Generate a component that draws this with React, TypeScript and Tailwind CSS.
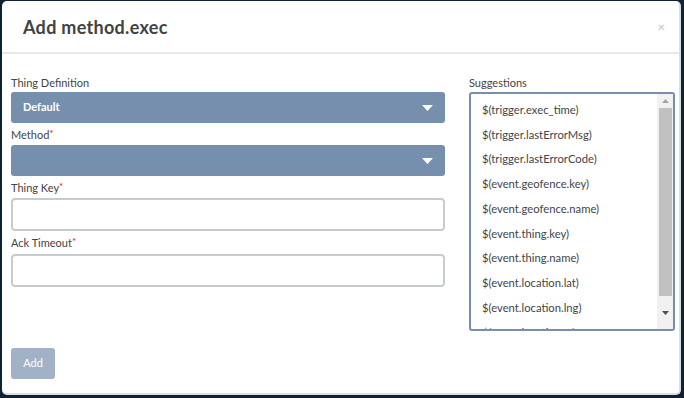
import React from "react";

const suggestions: string[] = [
  "$(trigger.exec_time)",
  "$(trigger.lastErrorMsg)",
  "$(trigger.lastErrorCode)",
  "$(event.geofence.key)",
  "$(event.geofence.name)",
  "$(event.thing.key)",
  "$(event.thing.name)",
  "$(event.location.lat)",
  "$(event.location.lng)",
  "$(event.location.ts)",
];

const Caret: React.FC = () => (
  <svg width="11" height="6" viewBox="0 0 11 6" className="mr-[12px]">
    <polygon points="0,0 11,0 5.5,6" fill="#ffffff" />
  </svg>
);

const Label: React.FC<{ text: string; required?: boolean }> = ({ text, required }) => (
  <div className="h-[16px] text-[11px] leading-[16px] text-[#444]">
    {text}
    {required && <span className="text-[#e8141b] align-top text-[10px] leading-[12px]">*</span>}
  </div>
);

const App: React.FC = () => {
  return (
    <div
      className="w-[684px] h-[398px] bg-[#0f2232] pl-[2px] pt-[1px] pr-[3px] pb-[3px]"
      style={{ fontFamily: "Lato, 'Open Sans', sans-serif" }}
    >
      <div className="w-full h-full bg-white rounded-[5px] border-r-2 border-b-2 border-[#dcdfe2] flex flex-col">
        {/* Header */}
        <div className="h-[53px] shrink-0 border-b-2 border-[#e6e8ea] flex items-center justify-between pl-[21px] pr-[14px]">
          <h2 className="text-[18px] font-bold text-[#424242] tracking-[0.3px] pt-[2px]">Add method.exec</h2>
          <span className="text-[13px] text-[#c4c4c4] leading-none pt-[2px]">×</span>
        </div>

        {/* Body */}
        <div className="flex pl-[9px] pt-[21px] pr-[4px]">
          <div className="w-[434px] flex flex-col">
            <Label text="Thing Definition" />
            <div className="mt-[1px] h-[31px] rounded-[3px] bg-[#768fac] flex items-center justify-between pl-[12px]">
              <span className="text-[11px] font-bold text-white">Default</span>
              <Caret />
            </div>

            <div className="mt-[4px]">
              <Label text="Method" required />
            </div>
            <div className="mt-[2px] h-[31px] rounded-[3px] bg-[#768fac] flex items-center justify-end">
              <Caret />
            </div>

            <div className="mt-[4px]">
              <Label text="Thing Key" required />
            </div>
            <div className="mt-[2px] h-[33px] rounded-[4px] border-2 border-[#c8cbce] bg-white" />

            <div className="mt-[4px]">
              <Label text="Ack Timeout" required />
            </div>
            <div className="mt-[3px] h-[33px] rounded-[4px] border-2 border-[#c8cbce] bg-white" />
          </div>

          <div className="w-[206px] ml-[24px] flex flex-col">
            <Label text="Suggestions" />
            <div className="mt-[1px] h-[239px] rounded-[3px] border-2 border-[#768fac] flex overflow-hidden">
              <div className="flex-1 pt-[4px] pl-[11px] overflow-hidden">
                {suggestions.map((s) => (
                  <div key={s} className="h-[24.75px] flex items-center text-[11.25px] text-[#444]">
                    {s}
                  </div>
                ))}
              </div>
              <div className="w-[16px] bg-[#f1f1f1] flex flex-col items-center">
                <div className="h-[14px] flex items-center justify-center">
                  <svg width="7" height="4" viewBox="0 0 7 4">
                    <polygon points="0,4 7,4 3.5,0" fill="#a3a3a3" />
                  </svg>
                </div>
                <div className="w-[13px] h-[188px] bg-[#c1c1c1]" />
                <div className="flex-1 flex items-center justify-center">
                  <svg width="7" height="4" viewBox="0 0 7 4">
                    <polygon points="0,0 7,0 3.5,4" fill="#505050" />
                  </svg>
                </div>
              </div>
            </div>
          </div>
        </div>

        {/* Footer */}
        <div className="pl-[9px] mt-[17px]">
          <button className="w-[44px] h-[31px] rounded-[3px] bg-[#a2b2c6] text-white text-[11px]">Add</button>
        </div>
      </div>
    </div>
  );
};

export default App;
